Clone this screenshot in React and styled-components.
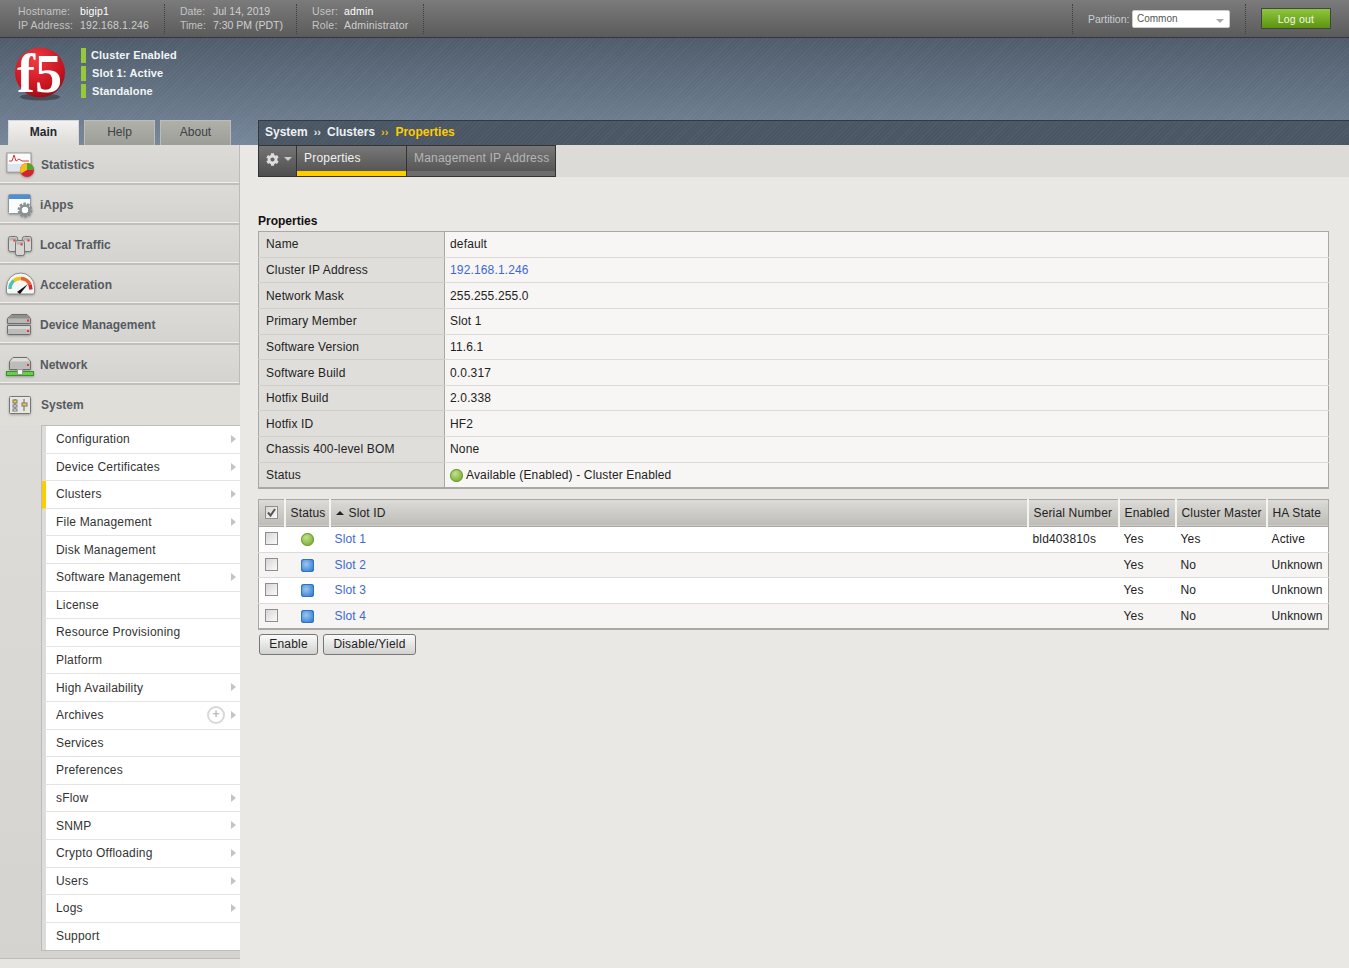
import React from "react";
import styled, { createGlobalStyle } from "styled-components";
import { FaCog } from "react-icons/fa";

const GlobalStyle = createGlobalStyle`
  html, body {
    margin: 0;
    padding: 0;
    height: 100%;
    overflow: hidden;
    background: #e9e8e4;
    font-family: "Liberation Sans", Arial, sans-serif;
    font-size: 12px;
    color: #222;
  }
`;

const Page = styled.div`
  width: 1349px;
  height: 968px;
  display: flex;
  flex-direction: column;
  overflow: hidden;
`;

/* top bar */
const TopBar = styled.div`
  height: 37px;
  flex: none;
  display: flex;
  align-items: center;
  justify-content: space-between;
  background: linear-gradient(#7b7b7b, #5b5b5b);
  border-bottom: 1px solid #33383d;
  font-size: 10.5px;
`;
const InfoSet = styled.div`
  display: flex;
  align-items: center;
  height: 100%;
`;
const Info = styled.div`
  display: grid;
  grid-template-columns: ${(p) => p.$label}px auto;
  grid-auto-rows: 14px;
  width: ${(p) => p.$width}px;
  padding-left: ${(p) => p.$pad}px;
  height: 30px;
  align-content: center;
  box-sizing: border-box;
  border-right: 1px dotted #3e3e3e;
  margin-top: 1px;
  letter-spacing: ${(p) => p.$spacing}px;
`;
const InfoLabel = styled.span`
  color: #c4c4c4;
`;
const InfoValue = styled.span`
  color: ${(p) => (p.$bright ? "#fff" : "#cfcfcf")};
`;
const Right = styled.div`
  display: flex;
  align-items: center;
  height: 100%;
`;
const PartitionWrap = styled.div`
  display: flex;
  align-items: center;
  justify-content: space-between;
  height: 30px;
  width: 174px;
  padding: 0 15px;
  box-sizing: border-box;
  border-left: 1px dotted #3e3e3e;
  border-right: 1px dotted #3e3e3e;
  margin-top: 1px;
  color: #c6ced6;
  font-size: 10.5px;
`;
const FakeSelect = styled.div`
  width: 98px;
  height: 18px;
  box-sizing: border-box;
  background: #fff;
  border: 1px solid #ccc;
  border-radius: 2px;
  color: #555;
  padding: 1px 4px;
  position: relative;
  font-size: 10px;
  line-height: 14px;
`;
const SelectCaret = styled.i`
  position: absolute;
  right: 5px;
  top: 8px;
  border: 4px solid transparent;
  border-top: 4px solid #aaa;
`;
const Logout = styled.button`
  width: 70px;
  height: 21px;
  margin: 0 18px 0 15px;
  padding: 0;
  border: 1px solid #444;
  background: linear-gradient(#8fc63f, #5c9410);
  color: #f2f7e6;
  font: 10.5px "Liberation Sans", Arial, sans-serif;
  letter-spacing: 0.2px;
`;

/* banner with logo, status lights, tabs and breadcrumb */
const Banner = styled.div`
  height: 107px;
  flex: none;
  display: flex;
  flex-direction: column;
  justify-content: space-between;
  background:
    repeating-linear-gradient(135deg, rgba(255, 255, 255, 0.035) 0 1px, transparent 1px 3px),
    linear-gradient(#4f5c6b, #76879a);
`;
const BannerTop = styled.div`
  display: flex;
  padding: 1px 0 0 14px;
`;
const Statuses = styled.div`
  display: flex;
  flex-direction: column;
  gap: 3px;
  margin: 9px 0 0 14px;
`;
const StatusLine = styled.div`
  height: ${(p) => p.$h || 15}px;
  border-left: 5px solid #96c83c;
  padding-left: ${(p) => p.$pad}px;
  color: #f3f5f7;
  font-size: 11px;
  font-weight: bold;
  line-height: ${(p) => p.$h || 15}px;
  letter-spacing: 0.15px;
`;
const BannerBottom = styled.div`
  height: 25px;
  display: flex;
`;
const Tabs = styled.div`
  width: 258px;
  flex: none;
  display: flex;
  gap: 5px;
  padding-left: 8px;
  box-sizing: border-box;
`;
const Tab = styled.div`
  width: 71px;
  height: 25px;
  box-sizing: border-box;
  text-align: center;
  line-height: 23px;
  border: 1px solid ${(p) => (p.$on ? "#d8d7d3" : "#bdbdb8")};
  border-bottom: 0;
  background: ${(p) => (p.$on ? "linear-gradient(#f3f2f0, #dcdbd7)" : "linear-gradient(#b0b0aa, #9d9e98)")};
  color: ${(p) => (p.$on ? "#1f2730" : "#3c4147")};
  font-weight: ${(p) => (p.$on ? "bold" : "normal")};
`;
const Crumbs = styled.div`
  flex: 1;
  box-sizing: border-box;
  border: 1px solid #333a42;
  border-right: 0;
  border-bottom: 0;
  background:
    repeating-linear-gradient(135deg, rgba(255, 255, 255, 0.035) 0 1px, transparent 1px 3px),
    #4a5663;
  padding-left: 6px;
  line-height: 22px;
  font-weight: bold;
  color: #eef1f4;
`;
const Sep = styled.span`
  margin: 0 ${(p) => (p.$gold ? 7 : 6)}px 0 6px;
  font-size: 11px;
  color: ${(p) => (p.$gold ? "#f0c000" : "#e6e9ec")};
`;
const Current = styled.span`
  color: #ffcc00;
`;

/* body */
const Body = styled.div`
  flex: 1;
  display: flex;
  min-height: 0;
`;
const Sidebar = styled.nav`
  width: 240px;
  flex: none;
  background: linear-gradient(#e2e1dd, #d4d3cf);
  display: flex;
  flex-direction: column;
`;
const NavRow = styled.div`
  height: 40px;
  box-sizing: border-box;
  display: flex;
  align-items: center;
  padding: ${(p) => (p.$open ? 0 : 2)}px 0 0 ${(p) => (p.$nudge ? 41 : 40)}px;
  position: relative;
  background: ${(p) => (p.$open ? "#dfded9" : "linear-gradient(#dcdbd7, #d4d3cf)")};
  border-right: ${(p) => (p.$open ? "0" : "1px solid #bcbbb7")};
  border-bottom: ${(p) => (p.$open ? "0" : "2px solid #bfbeba")};
  box-shadow: ${(p) => (p.$open ? "none" : "inset 0 -1px 0 #f0efec")};
  color: #555a60;
  font-weight: bold;
`;
const NavIcon = styled.svg`
  position: absolute;
  left: ${(p) => p.$left}px;
  top: ${(p) => p.$top}px;
  width: 32px;
  height: 28px;
  filter: drop-shadow(0 1px 1px rgba(0, 0, 0, 0.28));
`;
const SubMenu = styled.ul`
  list-style: none;
  margin: 0 0 0 41px;
  padding: 0;
  background: #fff;
  border-top: 1px solid #bdbcb8;
  border-left: 1px solid #bdbcb8;
  border-bottom: 1px solid #bdbcb8;
`;
const SubItem = styled.li`
  height: 27.6px;
  box-sizing: border-box;
  display: flex;
  align-items: center;
  padding-left: 10px;
  position: relative;
  border-left: 4px solid ${(p) => (p.$on ? "#ffcc00" : "#dcdcda")};
  border-bottom: 1px solid #e4e4e2;
  color: #333;
  letter-spacing: 0.2px;
  &:last-child {
    border-bottom: 0;
  }
`;
const Arrow = styled.i`
  position: absolute;
  right: 4px;
  top: 9px;
  border: 4px solid transparent;
  border-left: 5px solid #c4c4c4;
  border-right: 0;
`;
const PlusBadge = styled.span`
  position: absolute;
  right: 15px;
  top: 4px;
  width: 14px;
  height: 14px;
  border: 2px solid #d8d8d8;
  border-radius: 50%;
  color: #bbb;
  font-weight: bold;
  line-height: 13px;
  text-align: center;
  letter-spacing: 0;
`;
const SideFoot = styled.div`
  flex: 1;
  background: linear-gradient(#d4d3cf 0 7px, #bdbcb8 7px 8px, #e6e5e1 8px);
`;

const Main = styled.main`
  flex: 1;
  min-width: 0;
  padding-left: 18px;
  background: #e9e8e4;
`;
const TabStrip = styled.div`
  height: 32px;
  display: flex;
  background: #dcdbd7;
`;
const GearTab = styled.div`
  width: 39px;
  box-sizing: border-box;
  border: 1px solid #333;
  background: linear-gradient(#747474, #4e4e4e);
  color: #ddd;
  display: flex;
  align-items: center;
  padding: 0 0 4px 7px;
  gap: 5px;
  font-size: 13px;
`;
const GearCaret = styled.i`
  border: 4px solid transparent;
  border-top: 4px solid #ccc;
  margin-top: 4px;
`;
const SubTab = styled.div`
  width: ${(p) => p.$w}px;
  box-sizing: border-box;
  border: 1px solid #333;
  border-left: 0;
  background: linear-gradient(#777, #505050);
  color: ${(p) => (p.$on ? "#f2f2f2" : "#b6b6b6")};
  padding: 5px 0 0 7px;
  letter-spacing: 0.2px;
  box-shadow: inset 0 -5px 0 ${(p) => (p.$on ? "#ffcc00" : "#6d6d6d")};
`;
const Content = styled.div`
  padding-right: 20px;
`;
const Heading = styled.h2`
  margin: 37px 0 3px;
  font-size: 12px;
  line-height: 14px;
  color: #111;
`;
const PropTable = styled.table`
  width: 100%;
  border-collapse: collapse;
  table-layout: fixed;
  border: 1px solid #a9a8a5;
  border-width: 1px 1px 2px;
`;
const PropRow = styled.tr`
  height: 25.65px;
`;
const PropKey = styled.th`
  width: 178px;
  padding: 0 0 0 7px;
  text-align: left;
  font-weight: normal;
  color: #222;
  background: #dfdeda;
  border-right: 1px solid #a9a8a5;
  border-bottom: 1px solid #cfcec9;
  letter-spacing: 0.15px;
`;
const PropVal = styled.td`
  padding: 0 0 0 5px;
  background: #f7f6f4;
  border-bottom: 1px solid #dcdbd7;
  color: ${(p) => (p.$link ? "#3f67d0" : "#222")};
  letter-spacing: 0.15px;
`;
const Light = styled.i`
  display: inline-block;
  vertical-align: -3px;
  width: 13px;
  height: 13px;
  margin-right: ${(p) => p.$gap || 0}px;
  border-radius: ${(p) => (p.$square ? "3px" : "50%")};
  background: ${(p) =>
    p.$square
      ? "radial-gradient(circle at 40% 40%, #9cc6ee, #3b82d6 75%)"
      : "radial-gradient(circle at 40% 35%, #c4e08a, #7db23a 70%)"};
  box-shadow: inset 0 0 0 1px ${(p) => (p.$square ? "#2f74c4" : "#6d9f37")};
`;
const SlotTable = styled.table`
  width: 100%;
  margin-top: 10px;
  border-collapse: collapse;
  table-layout: fixed;
  border: 1px solid #a9a8a5;
  border-width: 1px 1px 2px;
`;
const HeadRow = styled.tr`
  height: 27px;
`;
const HeadCell = styled.th`
  width: ${(p) => (p.$w ? `${p.$w}px` : "auto")};
  padding: 0 0 0 ${(p) => p.$pad ?? 5}px;
  box-sizing: border-box;
  text-align: left;
  font-weight: normal;
  color: #222;
  background: linear-gradient(#dcdbd7, #bdbcb7);
  border-right: 2px solid #f4f3f0;
  border-bottom: 1px solid #a9a8a5;
  letter-spacing: 0.15px;
  &:last-child {
    border-right: 0;
  }
`;
const SlotRow = styled.tr`
  height: 25.6px;
  background: ${(p) => (p.$alt ? "#f6f5f3" : "#fff")};
`;
const SlotCell = styled.td`
  padding: 0 0 0 ${(p) => p.$pad ?? 5}px;
  text-align: ${(p) => p.$align || "left"};
  border-bottom: 1px solid #dcdbd7;
  color: ${(p) => (p.$link ? "#3f67d0" : "#222")};
  letter-spacing: 0.15px;
`;
const CheckBox = styled.span`
  display: inline-block;
  vertical-align: middle;
  width: 11px;
  height: 11px;
  background: linear-gradient(135deg, #d6d6d6, #fafafa);
  border: 1px solid #8e8e8e;
  position: relative;
  margin-top: -3px;
`;
const Tick = styled.svg`
  position: absolute;
  left: 0;
  top: 0;
  width: 11px;
  height: 11px;
`;
const SortUp = styled.i`
  display: inline-block;
  border: 4px solid transparent;
  border-top: 0;
  border-bottom: 4px solid #222;
  margin: 0 5px 2px 0;
`;
const Buttons = styled.div`
  display: flex;
  gap: 5px;
  padding: 4px 0 0 1px;
`;
const Button = styled.button`
  height: 21px;
  width: ${(p) => p.$w}px;
  padding: 0;
  border: 1px solid #777;
  border-radius: 3px;
  background: linear-gradient(#fafafa, #d2d2d0);
  font: 12px "Liberation Sans", Arial, sans-serif;
  letter-spacing: 0.2px;
  color: #222;
`;

/* icons, all drawn in a 32x28 box */
const StatisticsIcon = () => (
  <NavIcon viewBox="0 0 32 28" $left={6} $top={7}>
    <rect x="1" y="1" width="24" height="19" fill="#fbfbfb" stroke="#999" />
    <rect x="2" y="12" width="22" height="7" fill="#dfe5ee" />
    <path d="M3 9h3l2-6 2 6 3-2 3 2h7" fill="none" stroke="#d33a3a" />
    <circle cx="21" cy="18" r="7" fill="#d32335" />
    <path d="M21 18V11a7 7 0 0 1 7 7z" fill="#58a32a" />
    <path d="M21 18l-6 3.5A7 7 0 0 1 21 11z" fill="#f2bf1b" />
  </NavIcon>
);
const AppsIcon = () => (
  <NavIcon viewBox="0 0 32 28" $left={7} $top={8}>
    <rect x="1.5" y="1.5" width="22" height="19" rx="1" fill="#fbfcfe" stroke="#8c97a3" />
    <rect x="2" y="2" width="21" height="4" fill="#4d8ed8" />
    <circle cx="18" cy="17" r="5.5" fill="none" stroke="#8b9094" strokeWidth="4" strokeDasharray="2.2 1.2" />
    <circle cx="18" cy="17" r="4.5" fill="none" stroke="#8b9094" strokeWidth="2.4" />
  </NavIcon>
);
const ServerBlock = ({ x, y, w, h }) => (
  <g>
    <rect x={x} y={y} width={w} height={h} rx="2" fill="#d6d6d4" stroke="#747474" />
    <rect x={x + 1} y={y + 1} width={w - 2} height="3" fill="#b4b4b2" />
    <rect x={x + w - 4} y={y + 3} width="2" height="2" fill="#e33" />
  </g>
);
const TrafficIcon = () => (
  <NavIcon viewBox="0 0 32 28" $left={7} $top={8}>
    <ServerBlock x={1.5} y={3.5} w={9} h={15} />
    <ServerBlock x={15.5} y={3.5} w={9} h={15} />
    <ServerBlock x={8.5} y={7.5} w={9} h={15} />
  </NavIcon>
);
const GaugeIcon = () => (
  <NavIcon viewBox="0 0 32 28" $left={5} $top={6}>
    <path d="M1.5 16a14 14 0 0 1 28 0v5a2 2 0 0 1-2 2h-24a2 2 0 0 1-2-2z" fill="#f6f6f4" stroke="#8b8b8b" />
    <path d="M5 18a10.5 10.5 0 0 1 4-8.5" fill="none" stroke="#4cc3b4" strokeWidth="3.5" />
    <path d="M9 9.5a10.5 10.5 0 0 1 7-2" fill="none" stroke="#f2c21c" strokeWidth="3.5" />
    <path d="M16 7.5a10.5 10.5 0 0 1 9 6" fill="none" stroke="#e8602a" strokeWidth="3.5" />
    <path d="M25 13.5l1 5" stroke="#d8232f" strokeWidth="3.5" />
    <path d="M12 21l11-8-8 10z" fill="#111" />
  </NavIcon>
);
const DeviceIcon = () => (
  <NavIcon viewBox="0 0 32 28" $left={6} $top={6}>
    <path d="M6 3.5h15l3.5 4v5h-23v-5z" fill="#b8b8b6" stroke="#6e6e6e" />
    <path d="M6 4h15l3 3.5H2z" fill="#8f8f8d" />
    <rect x="21" y="8.5" width="2" height="2" fill="#e33" />
    <path d="M1.5 14.5h23v8a1 1 0 0 1-1 1h-21a1 1 0 0 1-1-1z" fill="#bcbcba" stroke="#6e6e6e" />
    <path d="M2 15h22v3H2z" fill="#d6d6d4" />
    <rect x="21" y="19" width="2" height="2" fill="#e33" />
  </NavIcon>
);
const NetworkIcon = () => (
  <NavIcon viewBox="0 0 32 28" $left={5} $top={6}>
    <path d="M8 6.5h14l3.5 4v8h-21v-8z" fill="#bcbcba" stroke="#6e6e6e" />
    <path d="M8 7h14l3 3.5H5z" fill="#dcdcda" />
    <rect x="22" y="13" width="2" height="2" fill="#e33" />
    <rect x="1.5" y="20.5" width="27" height="4" fill="#63d04a" stroke="#3f8f2e" />
    <rect x="12.5" y="18.5" width="5" height="5" fill="#f4f4f4" stroke="#999" />
  </NavIcon>
);
const SystemIcon = () => (
  <NavIcon viewBox="0 0 32 28" $left={8} $top={9}>
    <rect x="1.5" y="2.5" width="21" height="17" rx="1" fill="#e6e6e2" stroke="#777" />
    <path d="M7 5v12M16 5v12" stroke="#666" />
    <rect x="5" y="6" width="4" height="3" fill="#f0cf2e" stroke="#777" />
    <rect x="5" y="11" width="4" height="2" fill="#fff" stroke="#777" />
    <rect x="5" y="15" width="4" height="2" fill="#fff" stroke="#777" />
    <rect x="14" y="9" width="5" height="3" fill="#f0cf2e" stroke="#777" />
  </NavIcon>
);
const F5Logo = () => (
  <svg width="53" height="64" viewBox="0 -8 53 64">
    <defs>
      <radialGradient id="ball" cx="40%" cy="25%" r="80%">
        <stop offset="0%" stopColor="#ee3a42" />
        <stop offset="70%" stopColor="#c8141f" />
        <stop offset="100%" stopColor="#8e0e15" />
      </radialGradient>
    </defs>
    <ellipse cx="26" cy="50" rx="20" ry="3.5" fill="#2e343a" opacity="0.6" />
    <circle cx="26" cy="25.5" r="25" fill="url(#ball)" />
    <text x="3" y="45" fontFamily="Liberation Serif, serif" fontSize="54" fontWeight="bold" fill="#fff">
      f5
    </text>
  </svg>
);

const navAbove = [
  { name: "Statistics", Icon: StatisticsIcon, nudge: true },
  { name: "iApps", Icon: AppsIcon },
  { name: "Local Traffic", Icon: TrafficIcon },
  { name: "Acceleration", Icon: GaugeIcon },
  { name: "Device Management", Icon: DeviceIcon },
  { name: "Network", Icon: NetworkIcon },
];

const systemItems = [
  ["Configuration", true],
  ["Device Certificates", true],
  ["Clusters", true],
  ["File Management", true],
  ["Disk Management", false],
  ["Software Management", true],
  ["License", false],
  ["Resource Provisioning", false],
  ["Platform", false],
  ["High Availability", true],
  ["Archives", true],
  ["Services", false],
  ["Preferences", false],
  ["sFlow", true],
  ["SNMP", true],
  ["Crypto Offloading", true],
  ["Users", true],
  ["Logs", true],
  ["Support", false],
];

const properties = [
  ["Name", "default"],
  ["Cluster IP Address", "192.168.1.246", true],
  ["Network Mask", "255.255.255.0"],
  ["Primary Member", "Slot 1"],
  ["Software Version", "11.6.1"],
  ["Software Build", "0.0.317"],
  ["Hotfix Build", "2.0.338"],
  ["Hotfix ID", "HF2"],
  ["Chassis 400-level BOM", "None"],
];

const slots = [
  { id: "Slot 1", serial: "bld403810s", master: "Yes", state: "Active", up: true },
  { id: "Slot 2", serial: "", master: "No", state: "Unknown" },
  { id: "Slot 3", serial: "", master: "No", state: "Unknown" },
  { id: "Slot 4", serial: "", master: "No", state: "Unknown" },
];

export default function App() {
  return (
    <Page>
      <GlobalStyle />
      <TopBar>
        <InfoSet>
          <Info $width={165} $pad={18} $label={62} $spacing={0.15}>
            <InfoLabel>Hostname:</InfoLabel>
            <InfoValue $bright>bigip1</InfoValue>
            <InfoLabel>IP Address:</InfoLabel>
            <InfoValue>192.168.1.246</InfoValue>
          </Info>
          <Info $width={132} $pad={15} $label={33} $spacing={0}>
            <InfoLabel>Date:</InfoLabel>
            <InfoValue>Jul 14, 2019</InfoValue>
            <InfoLabel>Time:</InfoLabel>
            <InfoValue>7:30 PM (PDT)</InfoValue>
          </Info>
          <Info $width={127} $pad={15} $label={32} $spacing={0.2}>
            <InfoLabel>User:</InfoLabel>
            <InfoValue $bright>admin</InfoValue>
            <InfoLabel>Role:</InfoLabel>
            <InfoValue>Administrator</InfoValue>
          </Info>
        </InfoSet>
        <Right>
          <PartitionWrap>
            Partition:
            <FakeSelect>
              Common
              <SelectCaret />
            </FakeSelect>
          </PartitionWrap>
          <Logout>Log out</Logout>
        </Right>
      </TopBar>

      <Banner>
        <BannerTop>
          <F5Logo />
          <Statuses>
            <StatusLine $pad={5}>Cluster Enabled</StatusLine>
            <StatusLine $pad={6}>Slot 1: Active</StatusLine>
            <StatusLine $pad={6} $h={14}>
              Standalone
            </StatusLine>
          </Statuses>
        </BannerTop>
        <BannerBottom>
          <Tabs>
            <Tab $on>Main</Tab>
            <Tab>Help</Tab>
            <Tab>About</Tab>
          </Tabs>
          <Crumbs>
            System<Sep>››</Sep>Clusters<Sep $gold>››</Sep>
            <Current>Properties</Current>
          </Crumbs>
        </BannerBottom>
      </Banner>

      <Body>
        <Sidebar>
          {navAbove.map(({ name, Icon, nudge }) => (
            <NavRow key={name} $nudge={nudge}>
              <Icon />
              {name}
            </NavRow>
          ))}
          <NavRow $open $nudge>
            <SystemIcon />
            System
          </NavRow>
          <SubMenu>
            {systemItems.map(([name, more]) => (
              <SubItem key={name} $on={name === "Clusters"}>
                {name}
                {name === "Archives" && <PlusBadge>+</PlusBadge>}
                {more && <Arrow />}
              </SubItem>
            ))}
          </SubMenu>
          <SideFoot />
        </Sidebar>

        <Main>
          <TabStrip>
            <GearTab>
              <FaCog />
              <GearCaret />
            </GearTab>
            <SubTab $w={110} $on>
              Properties
            </SubTab>
            <SubTab $w={149}>Management IP Address</SubTab>
          </TabStrip>
          <Content>
            <Heading>Properties</Heading>
            <PropTable>
              <tbody>
                {properties.map(([key, value, link]) => (
                  <PropRow key={key}>
                    <PropKey>{key}</PropKey>
                    <PropVal $link={link}>{value}</PropVal>
                  </PropRow>
                ))}
                <PropRow>
                  <PropKey>Status</PropKey>
                  <PropVal>
                    <Light $gap={3} />
                    Available (Enabled) - Cluster Enabled
                  </PropVal>
                </PropRow>
              </tbody>
            </PropTable>

            <SlotTable>
              <thead>
                <HeadRow>
                  <HeadCell $w={26} $pad={6}>
                    <CheckBox>
                      <Tick viewBox="0 0 11 11">
                        <path d="M2 5.5l2.5 3L9 2" fill="none" stroke="#555" strokeWidth="2" />
                      </Tick>
                    </CheckBox>
                  </HeadCell>
                  <HeadCell $w={45}>Status</HeadCell>
                  <HeadCell $pad={5}>
                    <SortUp />
                    Slot ID
                  </HeadCell>
                  <HeadCell $w={91}>Serial Number</HeadCell>
                  <HeadCell $w={57}>Enabled</HeadCell>
                  <HeadCell $w={91}>Cluster Master</HeadCell>
                  <HeadCell $w={62}>HA State</HeadCell>
                </HeadRow>
              </thead>
              <tbody>
                {slots.map((slot, i) => (
                  <SlotRow key={slot.id} $alt={i % 2 === 1}>
                    <SlotCell $pad={6}>
                      <CheckBox />
                    </SlotCell>
                    <SlotCell $pad={0} $align="center">
                      <Light $square={!slot.up} />
                    </SlotCell>
                    <SlotCell $link>{slot.id}</SlotCell>
                    <SlotCell>{slot.serial}</SlotCell>
                    <SlotCell>Yes</SlotCell>
                    <SlotCell>{slot.master}</SlotCell>
                    <SlotCell>{slot.state}</SlotCell>
                  </SlotRow>
                ))}
              </tbody>
            </SlotTable>
            <Buttons>
              <Button $w={59}>Enable</Button>
              <Button $w={93}>Disable/Yield</Button>
            </Buttons>
          </Content>
        </Main>
      </Body>
    </Page>
  );
}
